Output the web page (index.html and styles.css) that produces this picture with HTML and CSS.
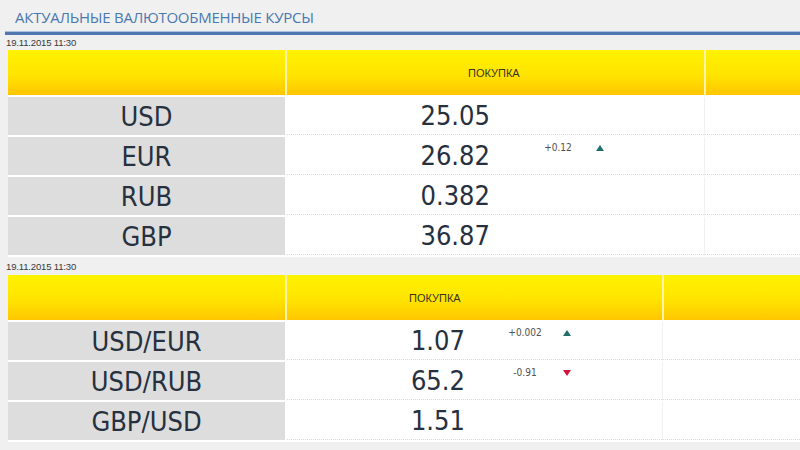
FILE: index.html
```html
<!DOCTYPE html>
<html lang="ru">
<head>
<meta charset="utf-8">
<title>Курсы валют</title>
<link rel="stylesheet" href="styles.css">
</head>
<body>
<div class="page">
  <div class="title-bar">
    <h1 class="title">АКТУАЛЬНЫЕ ВАЛЮТООБМЕННЫЕ КУРСЫ</h1>
  </div>

  <div class="stamp">19.11.2015 11:30</div>
  <div class="rates rates-a">
    <div class="row head">
      <div class="cell name"></div>
      <div class="cell buy"><span class="head-label">ПОКУПКА</span></div>
      <div class="cell rest"></div>
    </div>
    <div class="row">
      <div class="cell name">USD</div>
      <div class="cell buy"><span class="val">25.05</span><span class="chg"></span></div>
      <div class="cell rest"></div>
    </div>
    <div class="row">
      <div class="cell name">EUR</div>
      <div class="cell buy"><span class="val">26.82</span><span class="chg"><span class="delta">+0.12</span><span class="tri up"></span></span></div>
      <div class="cell rest"></div>
    </div>
    <div class="row">
      <div class="cell name">RUB</div>
      <div class="cell buy"><span class="val">0.382</span><span class="chg"></span></div>
      <div class="cell rest"></div>
    </div>
    <div class="row">
      <div class="cell name">GBP</div>
      <div class="cell buy"><span class="val">36.87</span><span class="chg"></span></div>
      <div class="cell rest"></div>
    </div>
  </div>

  <div class="stamp stamp-b">19.11.2015 11:30</div>
  <div class="rates rates-b">
    <div class="row head">
      <div class="cell name"></div>
      <div class="cell buy"><span class="head-label">ПОКУПКА</span></div>
      <div class="cell rest"></div>
    </div>
    <div class="row">
      <div class="cell name">USD/EUR</div>
      <div class="cell buy"><span class="val">1.07</span><span class="chg"><span class="delta">+0.002</span><span class="tri up"></span></span></div>
      <div class="cell rest"></div>
    </div>
    <div class="row">
      <div class="cell name">USD/RUB</div>
      <div class="cell buy"><span class="val">65.2</span><span class="chg"><span class="delta">-0.91</span><span class="tri down"></span></span></div>
      <div class="cell rest"></div>
    </div>
    <div class="row">
      <div class="cell name">GBP/USD</div>
      <div class="cell buy"><span class="val">1.51</span><span class="chg"></span></div>
      <div class="cell rest"></div>
    </div>
  </div>
</div>
</body>
</html>
```

FILE: styles.css
```css
html, body {
  margin: 0;
  padding: 0;
  background: #efefef;
}

.page {
  width: 800px;
  height: 450px;
  overflow: hidden;
  background: #f0f0f0;
  font-family: "Liberation Sans", Arial, sans-serif;
}

.title-bar {
  height: 32px;
  margin-left: 5px;
  border-bottom: 3px solid #4f78b0;
  box-shadow: 0 -1px 0 #a9c1e0 inset;
  display: flex;
  align-items: center;
}

.title {
  margin: 0 0 0 10px;
  font-family: "Open Sans", sans-serif;
  font-weight: 400;
  font-size: 15px;
  letter-spacing: -0.25px;
  color: #4a79b0;
  line-height: 1;
  padding-top: 3px;
}

.stamp {
  height: 15px;
  padding-left: 6px;
  font-size: 9.6px;
  line-height: 16px;
  color: #3a3a3a;
  letter-spacing: -0.2px;
}

.stamp-b {
  height: 18px;
  line-height: 19px;
}

.rates {
  margin-left: 8px;
  background: #ffffff;
  padding-bottom: 2px;
}

.row {
  display: grid;
  height: 38px;
  margin-top: 2px;
  column-gap: 2px;
}

.rates-a .row { grid-template-columns: 277px 417px 1fr; }
.rates-b .row { grid-template-columns: 277px 375px 1fr; }

.row.head {
  height: 45px;
  margin-top: 0;
  background: #fdf3a8;
}

.cell {
  display: flex;
  align-items: center;
}

.head .cell {
  background: linear-gradient(#fff200 0%, #ffe400 55%, #ffc600 100%);
}

.head-label {
  font-size: 11px;
  color: #3a3320;
}

.rates-a .head-label { margin-left: 181px; }
.rates-b .head-label { margin-left: 122px; }

.name {
  justify-content: center;
  background: #dddddd;
  font-family: "DejaVu Sans Condensed", "DejaVu Sans", sans-serif;
  font-size: 27px;
  color: #26303f;
}

.buy, .rest {
  border-bottom: 1px dotted #dcdcdc;
}

.head .buy, .head .rest { border-bottom: none; }

.rest {
  border-left: 1px solid #f1f1f1;
  margin-left: -2px;
}

.head .rest { margin-left: 0; border-left: none; }

.val {
  font-family: "DejaVu Sans Condensed", "DejaVu Sans", sans-serif;
  font-size: 27px;
  color: #26303f;
  text-align: right;
}

.rates-a .val { width: 203px; }
.rates-b .val { width: 178px; }

.chg {
  align-self: flex-start;
  display: flex;
  align-items: center;
  padding-top: 5px;
}

.rates-a .chg { margin-left: 40px; }
.rates-b .chg { margin-left: 32px; }

.delta {
  width: 56px;
  text-align: center;
  font-family: "DejaVu Sans Condensed", "DejaVu Sans", sans-serif;
  font-size: 10px;
  color: #505050;
}

.tri {
  width: 0;
  height: 0;
  margin-left: 10px;
  border-left: 4px solid transparent;
  border-right: 4px solid transparent;
}

.tri.up { border-bottom: 6px solid #1d6e6c; }
.tri.down { border-top: 6px solid #d3123a; }
```
